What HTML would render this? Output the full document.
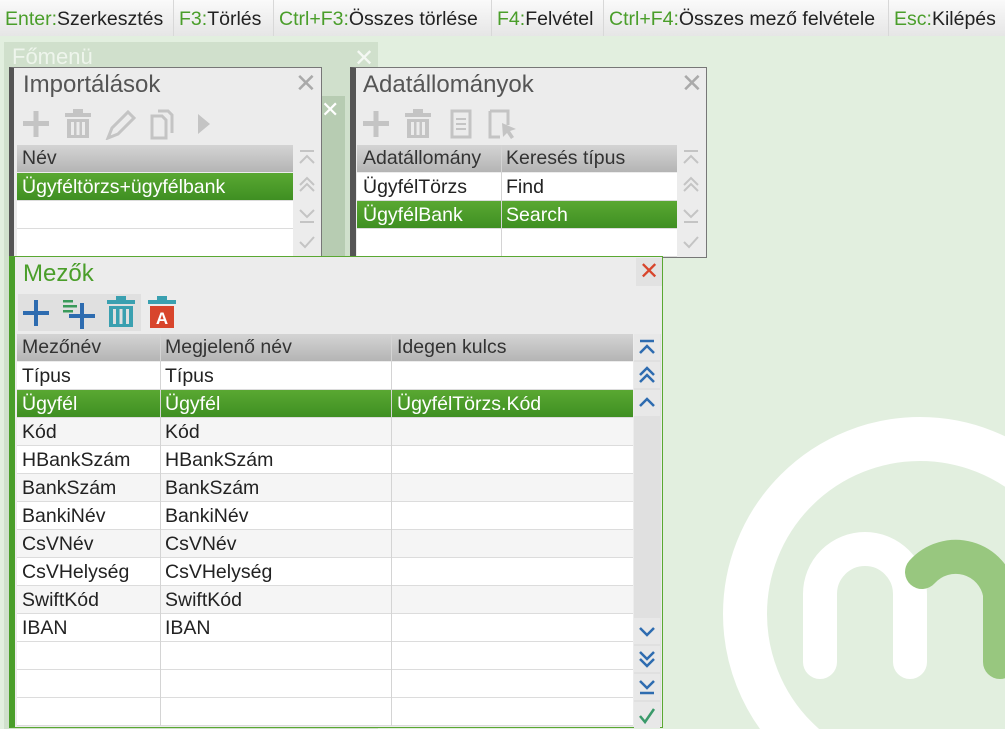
<!DOCTYPE html>
<html><head><meta charset="utf-8"><style>
*{margin:0;padding:0;box-sizing:border-box}
html,body{width:1005px;height:729px;overflow:hidden}
body{background:#e2efdf;font-family:"Liberation Sans",sans-serif;position:relative;color:#222}
.abs{position:absolute}
#top{left:0;top:0;width:1005px;height:36px;background:linear-gradient(#fafafa,#e6e6e6);font-size:19.5px;white-space:nowrap;overflow:hidden}
#top span.it{position:absolute;top:8px;padding-left:5px}
#top b{font-weight:normal;color:#4a9e2a}
.sep{position:absolute;top:0;width:1px;height:36px;background:#d8d8d8}
.panel{position:absolute;background:#ececec;border:1px solid #777}
.title{position:absolute;font-size:24px;color:#555}
.x{position:absolute;font-size:26px;color:#aaa;line-height:1}
.hdr{position:absolute;height:27px;background:linear-gradient(#d4d4d4,#b4b4b4);color:#333;overflow:hidden}
.cell{position:absolute;font-size:19.5px;line-height:28px;white-space:nowrap}
.row{position:absolute;height:28px;border-bottom:1px solid #dcdcdc;background:#fff;overflow:hidden}
.sel{background:linear-gradient(#5aa832,#3f8f22);color:#fff}
.vl{position:absolute;width:1px;background:#d4d4d4}
.sb{position:absolute;width:26px;height:26px;background:#e8e8e8}
.sb svg{position:absolute;left:0;top:0}
</style></head><body>
<div id="top" class="abs">
<span class="it" style="left:0"><b>Enter:</b>Szerkesztés</span><div class="sep" style="left:173px"></div>
<span class="it" style="left:174px"><b>F3:</b>Törlés</span><div class="sep" style="left:273px"></div>
<span class="it" style="left:274px"><b>Ctrl+F3:</b>Összes törlése</span><div class="sep" style="left:491px"></div>
<span class="it" style="left:492px"><b>F4:</b>Felvétel</span><div class="sep" style="left:603px"></div>
<span class="it" style="left:604px"><b>Ctrl+F4:</b>Összes mező felvétele</span><div class="sep" style="left:888px"></div>
<span class="it" style="left:889px"><b>Esc:</b>Kilépés</span>
</div>
<svg class="abs" style="left:0;top:0" width="1005" height="729">
<circle cx="920" cy="614" r="175" fill="none" stroke="#fff" stroke-width="44"/>
<path d="M820 662 V594 a45 45 0 0 1 90 0 V662" fill="none" stroke="#fff" stroke-width="34" stroke-linecap="round"/>
<path d="M922 572 a45 45 0 0 1 78 22 V662" fill="none" stroke="#98c77f" stroke-width="34" stroke-linecap="round"/>
</svg>
<div class="abs" style="left:4px;top:42px;width:374px;height:687px;background:#d0e0cc"></div>
<div class="abs" style="left:12px;top:44px;font-size:22px;color:#eef5ec">Főmenü</div>
<div class="abs" style="left:354px;top:44px;font-size:24px;color:#f4f8f3">✕</div>
<div class="abs" style="left:321px;top:96px;width:24px;height:170px;background:#b7ccb2"></div>
<div class="abs" style="left:321px;top:97px;font-size:22px;color:#fff">✕</div>
<div class="panel" style="left:9px;top:67px;width:313px;height:191px;border-left:5px solid #555"></div>
<div class="title" style="left:23px;top:71px">Importálások</div>
<div class="x" style="left:295px;top:70px">✕</div>
<svg class="abs" style="left:20px;top:108px" width="200" height="32" fill="#c4c4c4">
<rect x="3" y="13" width="26" height="5"/><rect x="13.5" y="3" width="5" height="26"/>
<rect x="45" y="5" width="26" height="4"/><rect x="53" y="1" width="10" height="4"/><path d="M47 11h22v19h-22z M51 14v13h3v-13z M56.5 14v13h3v-13z M62 14v13h3v-13z" fill-rule="evenodd"/>
<path d="M88 30l4-10 16-16 6 6-16 16z" fill="none" stroke="#c4c4c4" stroke-width="3"/>
<path d="M132 8h10l4 4v18h-14z M138 3h10l4 4v18" fill="none" stroke="#c4c4c4" stroke-width="3"/>
<path d="M178 6l12 10-12 10z"/>
</svg>
<div class="hdr" style="left:17px;top:145px;width:276px"><span class="cell" style="left:5px;top:0;line-height:27px">Név</span></div>
<div class="row sel" style="left:17px;top:173px;width:276px"><span class="cell" style="left:5px">Ügyféltörzs+ügyfélbank</span></div>
<div class="row" style="left:17px;top:201px;width:276px"></div>
<div class="row" style="left:17px;top:229px;width:276px"></div>
<svg class="abs" style="left:294px;top:145px" width="26" height="112" fill="none" stroke="#c4c4c4" stroke-width="2">
<path d="M6 6h14 M6 18l7-7 7 7"/><path d="M6 40l7-7 7 7 M6 46l7-7 7 7"/><path d="M6 65l7 7 7-7 M6 77h14"/><path d="M6 97l5 5 9-10"/>
</svg>
<div class="panel" style="left:350px;top:67px;width:357px;height:191px;border-left:6px solid #555"></div>
<div class="title" style="left:363px;top:71px">Adatállományok</div>
<div class="x" style="left:681px;top:70px">✕</div>
<svg class="abs" style="left:362px;top:108px" width="170" height="32" fill="#c4c4c4">
<rect x="1" y="13" width="26" height="5"/><rect x="11.5" y="3" width="5" height="26"/>
<rect x="43" y="5" width="26" height="4"/><rect x="51" y="1" width="10" height="4"/><path d="M45 11h22v19h-22z M49 14v13h3v-13z M54.5 14v13h3v-13z M60 14v13h3v-13z" fill-rule="evenodd"/>
<path d="M90 3h18v26h-18z" fill="none" stroke="#c4c4c4" stroke-width="3"/><rect x="94" y="10" width="10" height="2"/><rect x="94" y="15" width="10" height="2"/><rect x="94" y="20" width="10" height="2"/>
<path d="M128 3h18v14 M128 3v26h10" fill="none" stroke="#c4c4c4" stroke-width="3"/><path d="M140 15l14 6-6 2 4 6-3 2-4-6-4 4z"/>
</svg>
<div class="hdr" style="left:357px;top:145px;width:320px"><span class="cell" style="left:6px;line-height:27px">Adatállomány</span><span class="cell" style="left:149px;line-height:27px">Keresés típus</span></div>
<div class="row" style="left:357px;top:173px;width:320px"><span class="cell" style="left:6px">ÜgyfélTörzs</span><span class="cell" style="left:149px">Find</span></div>
<div class="row sel" style="left:357px;top:201px;width:320px"><span class="cell" style="left:6px">ÜgyfélBank</span><span class="cell" style="left:149px">Search</span></div>
<div class="row" style="left:357px;top:229px;width:320px"></div>
<div class="vl" style="left:501px;top:145px;height:112px"></div>
<svg class="abs" style="left:678px;top:145px" width="26" height="112" fill="none" stroke="#c4c4c4" stroke-width="2">
<path d="M6 6h14 M6 18l7-7 7 7"/><path d="M6 40l7-7 7 7 M6 46l7-7 7 7"/><path d="M6 65l7 7 7-7 M6 77h14"/><path d="M6 97l5 5 9-10"/>
</svg>
<div class="abs" style="left:9px;top:256px;width:654px;height:472px;background:#ececec;border:1px solid #5aa832;border-left:6px solid #4a9e2a"></div>
<div class="title" style="left:23px;top:260px;color:#4a9e2a">Mezők</div>
<div class="abs" style="left:636px;top:258px;width:26px;height:28px;background:#e2e2e2;color:#d8452c;font-size:24px;text-align:center;line-height:28px">✕</div>
<div class="abs" style="left:18px;top:294px;width:123px;height:37px;background:#e0e0e0"></div>
<svg class="abs" style="left:18px;top:294px" width="170" height="37">
<rect x="5" y="17" width="26" height="4" fill="#2e6cb0"/><rect x="16" y="6" width="4" height="26" fill="#2e6cb0"/>
<rect x="45" y="6" width="10" height="2.5" fill="#3a9a5a"/><rect x="45" y="11" width="14" height="2.5" fill="#3a9a5a"/><rect x="45" y="16" width="10" height="2.5" fill="#3a9a5a"/>
<rect x="51" y="20" width="26" height="4" fill="#2e6cb0"/><rect x="62" y="9" width="4" height="26" fill="#2e6cb0"/>
<rect x="89" y="6" width="28" height="4" fill="#3aa0b0"/><rect x="98" y="2" width="10" height="4" fill="#3aa0b0"/><path d="M91 12h24v21h-24z M95 15v15h3v-15z M101.5 15v15h3v-15z M108 15v15h3v-15z" fill="#3aa0b0" fill-rule="evenodd"/>
<rect x="130" y="6" width="28" height="4" fill="#3aa0b0"/><rect x="139" y="2" width="10" height="4" fill="#3aa0b0"/><rect x="132" y="12" width="24" height="22" fill="#d8452c"/>
<text x="144" y="30" font-family="Liberation Sans" font-size="17" font-weight="bold" fill="#fff" text-anchor="middle">A</text>
</svg>
<div class="hdr" style="left:17px;top:334px;width:616px"><span class="cell" style="left:5px;line-height:27px">Mezőnév</span><span class="cell" style="left:148px;line-height:27px">Megjelenő név</span><span class="cell" style="left:380px;line-height:27px">Idegen kulcs</span></div>
<div class="row" style="left:17px;top:362px;width:616px"><span class="cell" style="left:5px">Típus</span><span class="cell" style="left:148px">Típus</span></div>
<div class="row sel" style="left:17px;top:390px;width:616px"><span class="cell" style="left:5px">Ügyfél</span><span class="cell" style="left:148px">Ügyfél</span><span class="cell" style="left:380px">ÜgyfélTörzs.Kód</span></div>
<div class="row" style="left:17px;top:418px;width:616px;background:#f5f5f5"><span class="cell" style="left:5px">Kód</span><span class="cell" style="left:148px">Kód</span></div>
<div class="row" style="left:17px;top:446px;width:616px"><span class="cell" style="left:5px">HBankSzám</span><span class="cell" style="left:148px">HBankSzám</span></div>
<div class="row" style="left:17px;top:474px;width:616px;background:#f5f5f5"><span class="cell" style="left:5px">BankSzám</span><span class="cell" style="left:148px">BankSzám</span></div>
<div class="row" style="left:17px;top:502px;width:616px"><span class="cell" style="left:5px">BankiNév</span><span class="cell" style="left:148px">BankiNév</span></div>
<div class="row" style="left:17px;top:530px;width:616px;background:#f5f5f5"><span class="cell" style="left:5px">CsVNév</span><span class="cell" style="left:148px">CsVNév</span></div>
<div class="row" style="left:17px;top:558px;width:616px"><span class="cell" style="left:5px">CsVHelység</span><span class="cell" style="left:148px">CsVHelység</span></div>
<div class="row" style="left:17px;top:586px;width:616px;background:#f5f5f5"><span class="cell" style="left:5px">SwiftKód</span><span class="cell" style="left:148px">SwiftKód</span></div>
<div class="row" style="left:17px;top:614px;width:616px"><span class="cell" style="left:5px">IBAN</span><span class="cell" style="left:148px">IBAN</span></div>
<div class="row" style="left:17px;top:642px;width:616px"></div>
<div class="row" style="left:17px;top:670px;width:616px"></div>
<div class="row" style="left:17px;top:698px;width:616px"></div>
<div class="vl" style="left:160px;top:334px;height:392px"></div>
<div class="vl" style="left:391px;top:334px;height:392px"></div>
<div class="abs" style="left:634px;top:334px;width:27px;height:392px;background:#e0e0e0"></div>
<div class="sb" style="left:634px;top:334px"><svg width="26" height="26" fill="none" stroke="#2e6cb0" stroke-width="2.5"><path d="M6 7h14 M6 19l7-7 7 7"/></svg></div>
<div class="sb" style="left:634px;top:362px"><svg width="26" height="26" fill="none" stroke="#2e6cb0" stroke-width="2.5"><path d="M6 13l7-7 7 7 M6 20l7-7 7 7"/></svg></div>
<div class="sb" style="left:634px;top:390px"><svg width="26" height="26" fill="none" stroke="#2e6cb0" stroke-width="2.5"><path d="M6 16l7-7 7 7"/></svg></div>
<div class="sb" style="left:634px;top:618px"><svg width="26" height="26" fill="none" stroke="#2e6cb0" stroke-width="2.5"><path d="M6 10l7 7 7-7"/></svg></div>
<div class="sb" style="left:634px;top:646px"><svg width="26" height="26" fill="none" stroke="#2e6cb0" stroke-width="2.5"><path d="M6 6l7 7 7-7 M6 13l7 7 7-7"/></svg></div>
<div class="sb" style="left:634px;top:674px"><svg width="26" height="26" fill="none" stroke="#2e6cb0" stroke-width="2.5"><path d="M6 7l7 7 7-7 M6 19h14"/></svg></div>
<div class="sb" style="left:634px;top:702px"><svg width="26" height="26" fill="none" stroke="#3a9a6a" stroke-width="2.5"><path d="M6 14l5 6 9-13"/></svg></div>
</body></html>
